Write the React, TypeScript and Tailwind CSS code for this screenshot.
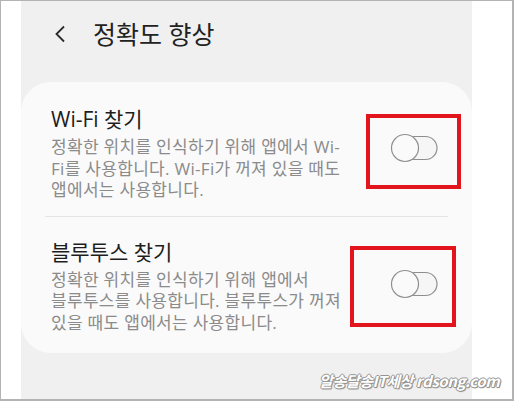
import React from "react"

const font = { fontFamily: "'Open Sans', 'Noto Sans CJK KR', sans-serif" }

function Toggle({ className = "" }: { className?: string }) {
  return (
    <svg width="50" height="30" viewBox="0 0 50 30" className={`shrink-0 ${className}`}>
      <rect x="13" y="3.5" width="34" height="23" rx="11.5" fill="#f6f6f6" stroke="#8f8f8f" strokeWidth="1.2" />
      <circle cx="15" cy="15" r="13.5" fill="#fafafa" stroke="#8f8f8f" strokeWidth="1.2" />
    </svg>
  )
}

function SettingRow({
  title,
  lines,
  className = "",
  toggleClass = "",
}: {
  title: string
  lines: string[]
  className?: string
  toggleClass?: string
}) {
  return (
    <div className={`flex items-center justify-between ${className}`}>
      <div>
        <div className="text-[21px] leading-[28px] text-[#1e1e1e]">{title}</div>
        <div className="mt-[3px] text-[17px] leading-[21.5px] tracking-[0.3px] text-[#8b8b8b]">
          {lines.map((l) => (
            <div key={l} className="whitespace-nowrap">{l}</div>
          ))}
        </div>
      </div>
      <Toggle className={toggleClass} />
    </div>
  )
}

export default function App() {
  return (
    <div className="relative w-[514px] h-[401px] overflow-hidden bg-white border border-[#b3b3b3] border-r-2 border-b-2 flex pl-[20px]" style={font}>
      <div className="w-[451px] h-full bg-[#f0f0f0] flex flex-col">
        <div className="h-[81px] flex items-start pt-[18px] pl-[33px]">
          <div className="flex items-center h-[30px]">
            <svg width="12" height="18" viewBox="0 0 12 18">
              <path d="M10 1.5 L2.5 9 L10 16.5" fill="none" stroke="#2a2a2a" strokeWidth="1.8" />
            </svg>
            <span className="ml-[27px] text-[25px] leading-[30px] text-[#222]">정확도 향상</span>
          </div>
        </div>
        <div className="bg-[#fafafa] rounded-[30px] pt-[23px] pb-[20px] pl-[30px] pr-[32px]">
          <SettingRow
            title="Wi-Fi 찾기"
            toggleClass="-mt-[10px]"
            lines={["정확한 위치를 인식하기 위해 앱에서 Wi-", "Fi를 사용합니다. Wi-Fi가 꺼져 있을 때도", "앱에서는 사용합니다."]}
          />
          <div className="mt-[15px] mb-[21px] -ml-[6px] -mr-[8px] h-px bg-[#e4e4e4]" />
          <SettingRow
            title="블루투스 찾기"
            toggleClass="-mt-[2px]"
            lines={["정확한 위치를 인식하기 위해 앱에서", "블루투스를 사용합니다. 블루투스가 꺼져", "있을 때도 앱에서는 사용합니다."]}
          />
        </div>
      </div>

      <div className="absolute left-[365px] top-[113px] w-[95px] h-[75px] border-[4px] border-[#e3151c]" />
      <div className="absolute left-[349px] top-[245px] w-[106px] h-[81px] border-[4px] border-[#e3151c]" />

      <div
        className="absolute left-[318px] top-[369px] whitespace-nowrap text-[15px] font-bold italic tracking-[-0.4px] text-white [text-shadow:1px_0_0_#959595,-1px_0_0_#959595,0_1px_0_#959595,0_-1px_0_#959595,1px_1px_1px_#808080]"
        style={{ fontFamily: "'Noto Sans CJK KR', sans-serif" }}
      >
        알송달송IT세상 rdsong.com
      </div>
    </div>
  )
}
